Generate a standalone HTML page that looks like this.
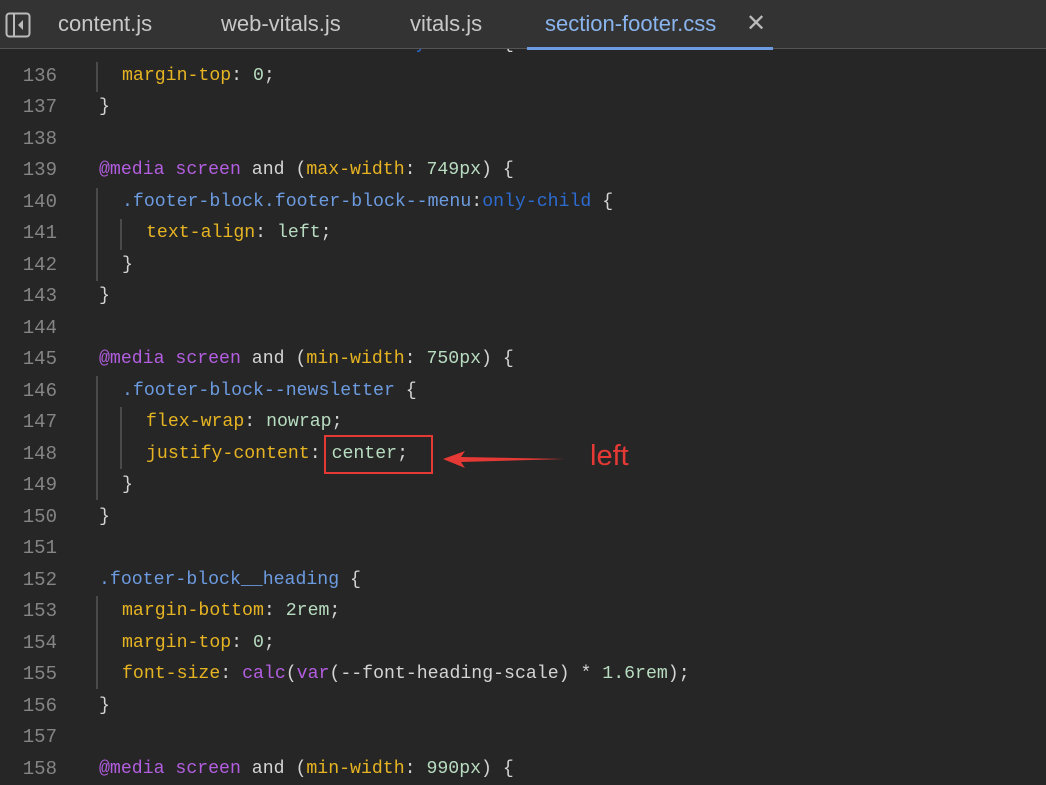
<!DOCTYPE html>
<html><head><meta charset="utf-8"><style>
body{margin:0;width:1046px;height:776px;background:#262626;overflow:hidden;position:relative;font-family:"Liberation Mono",monospace;}
.ln{position:absolute;left:0;width:57px;text-align:right;color:#858585;font-size:19px;line-height:31px;}
.c{position:absolute;font-size:18.2px;line-height:31px;color:#d4d4d4;white-space:pre;}
.p{color:#e6b422}.v{color:#b8dcc0}.s{color:#6c9be0}.ps{color:#2c6bd0}.m{color:#b35ee0}.b{color:#c8c8c8}
.g{position:absolute;width:2px;background:#4a4a4a;}
#tab{position:absolute;left:0;top:0;width:1046px;height:48px;background:#333;border-bottom:1px solid #555;}
.t{position:absolute;top:11px;font-family:"Liberation Sans",sans-serif;font-size:22px;color:#c8c8c8;}
</style></head><body>
<div class="ln" style="top:29px">135</div><div class="c" style="left:99px;top:29px"><span class="s">.footer-block--newsletter</span><span class="ps">:only-child</span> {</div>
<div id="tab">
<svg style="position:absolute;left:5px;top:12px" width="26" height="26" viewBox="0 0 26 26"><rect x="1.5" y="1.5" width="23" height="23" rx="3" fill="none" stroke="#bbb" stroke-width="2"/><line x1="9" y1="2" x2="9" y2="24" stroke="#bbb" stroke-width="2"/><path d="M18 8 L13 13 L18 18 Z" fill="#bbb"/></svg>
<div class="t" style="left:58px">content.js</div>
<div class="t" style="left:221px">web-vitals.js</div>
<div class="t" style="left:410px">vitals.js</div>
<div class="t" style="left:545px;color:#8ab4ee">section-footer.css</div>
<div class="t" style="left:746px;top:9px;font-size:24px;color:#bbb">✕</div>
<div style="position:absolute;left:527px;top:47px;width:246px;height:3px;background:#6d9de0"></div>
</div>
<div class="g" style="left:96px;top:62px;height:30px"></div>
<div class="g" style="left:96px;top:188px;height:93px"></div>
<div class="g" style="left:120px;top:219px;height:31px"></div>
<div class="g" style="left:96px;top:376px;height:124px"></div>
<div class="g" style="left:120px;top:407px;height:62px"></div>
<div class="g" style="left:96px;top:596px;height:93px"></div>

<div class="ln" style="top:61px">136</div><div class="c" style="left:122px;top:61px"><span class="p">margin-top</span>: <span class="v">0</span>;</div>
<div class="ln" style="top:92px">137</div><div class="c" style="left:99px;top:92px">}</div>
<div class="ln" style="top:124px">138</div>
<div class="ln" style="top:155px">139</div><div class="c" style="left:99px;top:155px"><span class="m">@media screen</span> and (<span class="p">max-width</span>: <span class="v">749px</span>) {</div>
<div class="ln" style="top:187px">140</div><div class="c" style="left:122px;top:187px"><span class="s">.footer-block.footer-block--menu</span>:<span class="ps">only-child</span> {</div>
<div class="ln" style="top:218px">141</div><div class="c" style="left:146px;top:218px"><span class="p">text-align</span>: <span class="v">left</span>;</div>
<div class="ln" style="top:250px">142</div><div class="c" style="left:122px;top:250px">}</div>
<div class="ln" style="top:281px">143</div><div class="c" style="left:99px;top:281px">}</div>
<div class="ln" style="top:313px">144</div>
<div class="ln" style="top:344px">145</div><div class="c" style="left:99px;top:344px"><span class="m">@media screen</span> and (<span class="p">min-width</span>: <span class="v">750px</span>) {</div>
<div class="ln" style="top:376px">146</div><div class="c" style="left:122px;top:376px"><span class="s">.footer-block--newsletter</span> {</div>
<div class="ln" style="top:407px">147</div><div class="c" style="left:146px;top:407px"><span class="p">flex-wrap</span>: <span class="v">nowrap</span>;</div>
<div class="ln" style="top:439px">148</div><div class="c" style="left:146px;top:439px"><span class="p">justify-content</span>: <span class="v">center</span>;</div>
<div class="ln" style="top:470px">149</div><div class="c" style="left:122px;top:470px">}</div>
<div class="ln" style="top:502px">150</div><div class="c" style="left:99px;top:502px">}</div>
<div class="ln" style="top:533px">151</div>
<div class="ln" style="top:565px">152</div><div class="c" style="left:99px;top:565px"><span class="s">.footer-block__heading</span> {</div>
<div class="ln" style="top:596px">153</div><div class="c" style="left:122px;top:596px"><span class="p">margin-bottom</span>: <span class="v">2rem</span>;</div>
<div class="ln" style="top:628px">154</div><div class="c" style="left:122px;top:628px"><span class="p">margin-top</span>: <span class="v">0</span>;</div>
<div class="ln" style="top:659px">155</div><div class="c" style="left:122px;top:659px"><span class="p">font-size</span>: <span class="m">calc</span>(<span class="m">var</span>(--font-heading-scale) * <span class="v">1.6rem</span>);</div>
<div class="ln" style="top:691px">156</div><div class="c" style="left:99px;top:691px">}</div>
<div class="ln" style="top:722px">157</div>
<div class="ln" style="top:754px">158</div><div class="c" style="left:99px;top:754px"><span class="m">@media screen</span> and (<span class="p">min-width</span>: <span class="v">990px</span>) {</div>

<div style="position:absolute;left:324px;top:435px;width:105px;height:35px;border:2px solid #e53935"></div>
<svg style="position:absolute;left:440px;top:448px" width="130" height="24"><path d="M3 11 L25 3 L21 9 L125 11 L21 14 L25 20 Z" fill="#e53935"/></svg>
<div style="position:absolute;left:590px;top:440px;font-family:'Liberation Sans',sans-serif;font-size:29px;color:#e53935">left</div>
</body></html>
